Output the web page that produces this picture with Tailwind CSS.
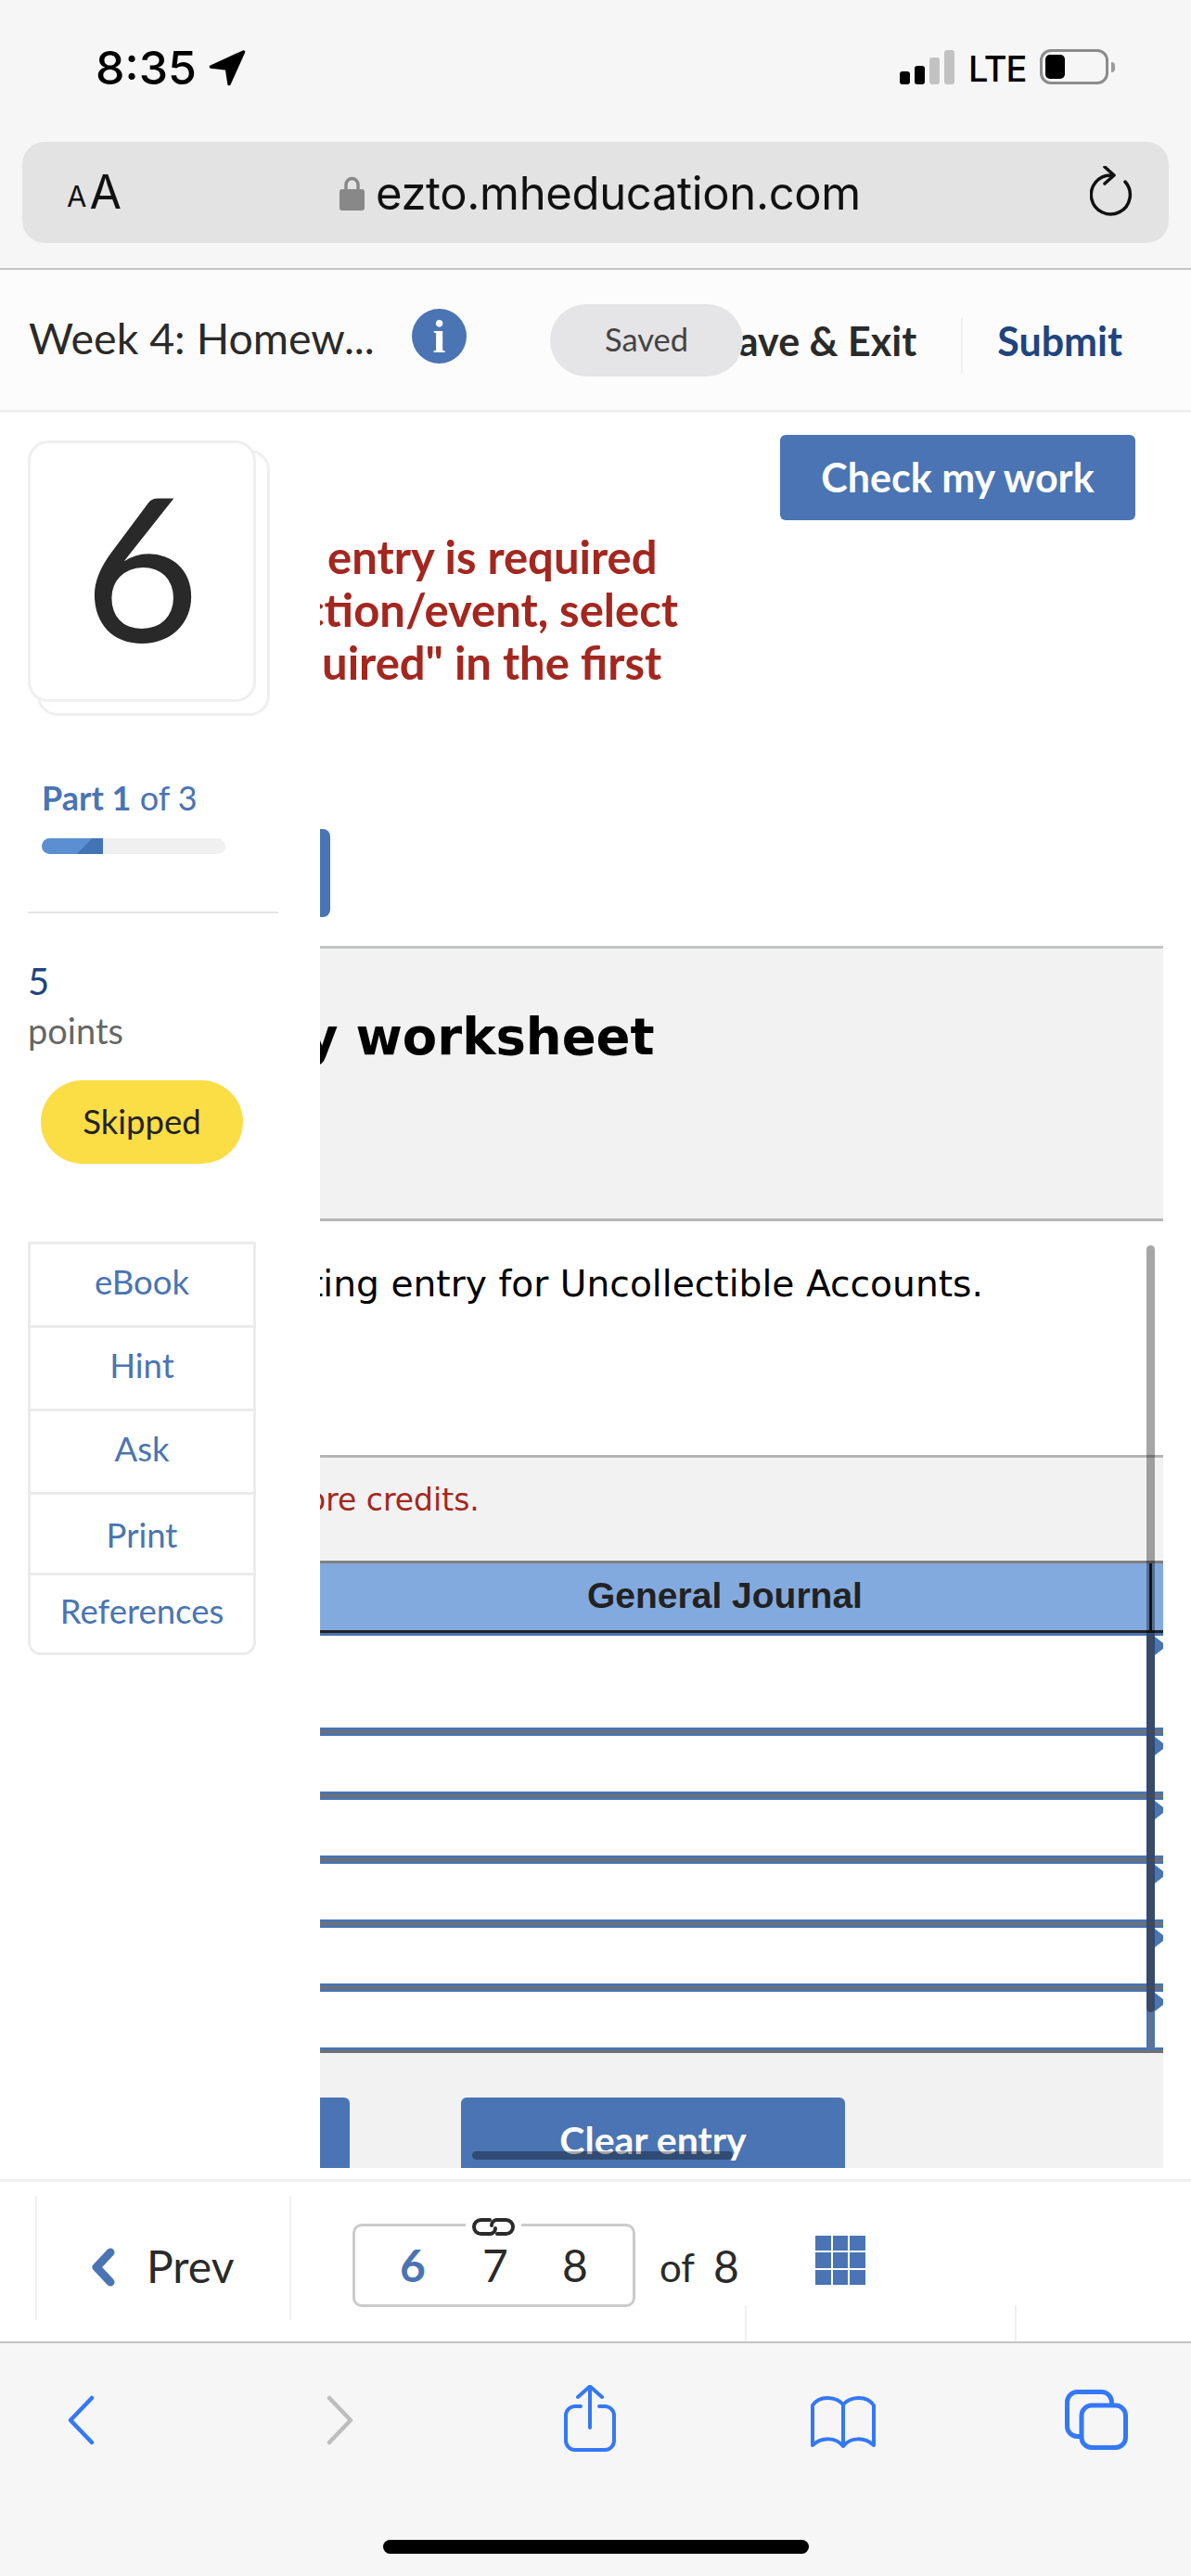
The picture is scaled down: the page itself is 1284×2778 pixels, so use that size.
<!DOCTYPE html>
<html lang="en">
<head>
<meta charset="UTF-8">
<title>ezto.mheducation.com</title>
<script src="https://cdn.jsdelivr.net/npm/@tailwindcss/browser@4"></script>
</head>
<body class="w-[1284px] h-[2778px] overflow-hidden bg-white font-['Lato',sans-serif] text-[#2a2a2a]">

<!-- safari top bar -->
<div class="h-[291px] bg-[#f6f6f6] border-b-2 border-[#c4c4c4] flex flex-col">
  <div class="h-[153px] flex items-start">
    <span class="ml-[103px] mt-[43px] font-['Inter',sans-serif] font-medium text-[50px] leading-[60px] text-black">8:35</span>
    <svg class="ml-[13px] mt-[54px]" width="40" height="39" viewBox="0 0 40 39"><path d="M37.5 2 L2.500 18 L19.500 20 L22 36.500 Z" fill="#000" stroke="#000" stroke-width="3.500" stroke-linejoin="round"/></svg>
    <div class="ml-[705px] mt-[54px] h-[37px] flex items-end gap-[5px]">
      <div class="w-[11px] h-[14px] rounded-[3px] bg-black"></div>
      <div class="w-[11px] h-[20px] rounded-[3px] bg-black"></div>
      <div class="w-[11px] h-[29px] rounded-[3px] bg-[#c2c2c2]"></div>
      <div class="w-[11px] h-[37px] rounded-[3px] bg-[#c2c2c2]"></div>
    </div>
    <span class="ml-[15px] mt-[51px] font-['Inter',sans-serif] font-medium text-[38px] leading-[46px] tracking-[-1px] text-black">LTE</span>
    <div class="ml-[14px] mt-[53px] w-[74px] h-[38px] rounded-[12px] border-[3px] border-[#8c8c8c] p-[3px]">
      <div class="w-[21px] h-[26px] rounded-[5px] bg-black"></div>
    </div>
    <div class="ml-[3px] mt-[67px] w-[4px] h-[11px] rounded-r-full bg-[#9a9a9a]"></div>
  </div>
  <div class="mx-[24px] h-[109px] rounded-[24px] bg-[#e3e3e3] flex items-start font-['Inter',sans-serif] text-[#111]">
    <span class="ml-[48px] mt-[44px] text-[31px] leading-[30px]">A</span>
    <span class="ml-[3px] mt-[29px] text-[50px] leading-[50px]">A</span>
    <svg class="ml-[235px] mt-[36px]" width="27" height="38" viewBox="0 0 27 38"><rect y="15" width="27" height="23" rx="3" fill="#888"/><path d="M7 17 V10 a6.500 6.500 0 0 1 13 0 V17" fill="none" stroke="#888" stroke-width="3.500"/></svg>
    <span class="ml-[12px] mt-[26px] text-[49px] leading-[60px] tracking-[-0.35px]">ezto.mheducation.com</span>
    <svg class="ml-[247px] mt-[26px]" width="46" height="54" viewBox="0 0 46 54"><path d="M38 17 A21 21 0 1 1 23 10" fill="none" stroke="#111" stroke-width="3.500" stroke-linecap="round"/><path d="M16 1 L26 10 L16 19" fill="none" stroke="#111" stroke-width="3.500" stroke-linecap="round" stroke-linejoin="round"/></svg>
  </div>
</div>

<!-- assignment header -->
<div class="relative h-[154px] bg-[#fcfcfc] border-b-[3px] border-[#f0f0f0] flex items-start">
  <span class="ml-[31px] mt-[45px] text-[46.500px] leading-[56px] whitespace-nowrap">Week 4: Homew...</span>
  <div class="ml-[40px] mt-[42px] w-[59px] h-[59px] rounded-full bg-[#4a74b3] flex items-center justify-center text-white font-['Liberation_Serif',serif] font-bold text-[50px] leading-none">i</div>
  <span class="ml-auto mt-[51px] font-bold text-[43px] leading-[52px] whitespace-nowrap">ave &amp; Exit</span>
  <div class="ml-[48px] mt-[52px] w-[2px] h-[60px] bg-[#efefef]"></div>
  <span class="ml-[37px] mr-[74px] mt-[51px] font-bold text-[43px] leading-[52px] text-[#1f4480]">Submit</span>
  <div class="absolute left-[593px] top-[37px] w-[208px] h-[78px] rounded-[39px] bg-[#e5e4e6] flex items-center justify-center pb-[3px] text-[34.500px] text-[#444]">Saved</div>
</div>

<!-- main -->
<div class="relative h-[1905px] flex bg-white">
  <!-- left rail -->
  <div class="w-[345px] shrink-0 pl-[30px] pt-[30px] flex flex-col items-start">
    <div class="relative w-[246px] h-[282px]">
      <div class="absolute left-[10px] top-[10px] w-[251px] h-[287px] rounded-[22px] border-[3px] border-[#efefef] bg-white"></div>
      <div class="absolute inset-0 rounded-[22px] border-[3px] border-[#efefef] bg-white flex justify-center items-center pb-[14px] text-[216px] leading-none text-[#292929]">6</div>
    </div>
    <div class="mt-[85px] ml-[15px] text-[36px] leading-[36px] text-[#4a74b3]"><span class="font-bold">Part 1</span> of 3</div>
    <div class="mt-[26px] ml-[15px] w-[198px] h-[17px] rounded-full bg-[#f0f0f0] overflow-hidden">
      <div class="w-[66px] h-full bg-[linear-gradient(135deg,#5a8fd1_66%,#4374b6_66%)]"></div>
    </div>
    <div class="mt-[62px] w-[270px] h-[2px] bg-[#e5e5e5]"></div>
    <div class="mt-[51px] text-[40px] leading-[45px] text-[#1f4480]">5</div>
    <div class="mt-[8px] text-[38px] leading-[44px] text-[#666]">points</div>
    <div class="mt-[32px] ml-[14px] w-[218px] h-[90px] rounded-full bg-[#fbdd45] flex items-center justify-center pb-[2px] text-[36.500px] text-[#222]">Skipped</div>
    <div class="mt-[84px] w-[246px] h-[446px] rounded-b-[14px] border-[3px] border-[#ebebeb] flex flex-col text-[36.500px] text-[#4a74b3] text-center">
      <div class="h-[90px] border-b-[3px] border-[#ebebeb] flex items-center justify-center pb-[6px]">eBook</div>
      <div class="h-[90px] border-b-[3px] border-[#ebebeb] flex items-center justify-center pb-[6px]">Hint</div>
      <div class="h-[90px] border-b-[3px] border-[#ebebeb] flex items-center justify-center pb-[6px]">Ask</div>
      <div class="h-[87px] border-b-[3px] border-[#ebebeb] flex items-center justify-center pt-[3px]">Print</div>
      <div class="h-[83px] flex items-center justify-center pb-[6px]">References</div>
    </div>
  </div>

  <!-- question column -->
  <div class="w-[909px] overflow-hidden flex flex-col">
    <div class="h-[116px] pt-[24px] flex justify-end pr-[30px]">
      <div class="w-[383px] h-[92px] rounded-[6px] bg-[#4a74b3] flex items-center justify-center text-white font-bold text-[43px]">Check my work</div>
    </div>
    <div class="mt-[11px] h-[171px] font-bold text-[49px] leading-[57px] text-[#a3271f] whitespace-nowrap">
      <div class="ml-[8px]">entry is required</div>
      <div class="-ml-[19px]">ction/event, select</div>
      <div class="ml-[2px]">uired" in the first</div>
    </div>
    <div class="mt-[151px] w-[11px] h-[95px] rounded-r-[8px] bg-[#4a74b3]"></div>

    <div class="mt-[31px] h-[297px] bg-[#f2f2f2] border-y-[3px] border-t-[#c3c5c5] border-b-[#b5b5b5] font-['DejaVu_Sans',sans-serif] font-bold text-[54.500px] leading-[64px] text-black whitespace-nowrap">
      <div class="-ml-[16px] mt-[63px]">y worksheet</div>
    </div>
    <div class="h-[252px] font-['DejaVu_Sans',sans-serif] text-[39.200px] leading-[46px] text-black whitespace-nowrap">
      <div class="-ml-[12px] mt-[45px]">ting entry for Uncollectible Accounts.</div>
    </div>
    <div class="h-[117px] bg-[#f2f2f2] border-y-[3px] border-t-[#b5b5b5] border-b-[#808080] font-['DejaVu_Sans',sans-serif] text-[33px] leading-[40px] text-[#a3271f] whitespace-nowrap">
      <div class="-ml-[14px] mt-[26px]">ore credits.</div>
    </div>

    <!-- journal table -->
    <div class="flex flex-col">
      <div class="h-[72px] bg-[#83aadf] flex font-['Liberation_Sans',sans-serif] font-bold text-[39px] text-[#222]">
        <div class="flex-1 pl-[288px] leading-[70px]">General Journal</div>
        <div class="w-[9px] flex justify-center"><div class="w-[3px] bg-[#1c1c1c]"></div></div>
        <div class="w-[9px]"></div>
      </div>
      <div class="h-[3px] bg-[#222]"></div>
      <div class="h-[3px] bg-[#4a74b3]"></div>

      <div class="h-[99px] flex">
        <div class="flex-1"></div>
        <div class="w-[9px] flex justify-center bg-[#4a74b3]"><div class="w-[3px] bg-[#707070]"></div></div>
        <div class="w-[9px] pt-[1px]"><div class="h-[20px] bg-[#4a74b3] [clip-path:polygon(0_0,100%_35%,100%_65%,0_100%)]"></div></div>
      </div>
      <div class="h-[9px] bg-[#707070] border-y-[3px] border-[#4a74b3]"></div>
      <div class="h-[60px] flex">
        <div class="flex-1"></div>
        <div class="w-[9px] flex justify-center bg-[#4a74b3]"><div class="w-[3px] bg-[#707070]"></div></div>
        <div class="w-[9px] pt-[1px]"><div class="h-[20px] bg-[#4a74b3] [clip-path:polygon(0_0,100%_35%,100%_65%,0_100%)]"></div></div>
      </div>
      <div class="h-[9px] bg-[#707070] border-y-[3px] border-[#4a74b3]"></div>
      <div class="h-[60px] flex">
        <div class="flex-1"></div>
        <div class="w-[9px] flex justify-center bg-[#4a74b3]"><div class="w-[3px] bg-[#707070]"></div></div>
        <div class="w-[9px] pt-[1px]"><div class="h-[20px] bg-[#4a74b3] [clip-path:polygon(0_0,100%_35%,100%_65%,0_100%)]"></div></div>
      </div>
      <div class="h-[9px] bg-[#707070] border-y-[3px] border-[#4a74b3]"></div>
      <div class="h-[60px] flex">
        <div class="flex-1"></div>
        <div class="w-[9px] flex justify-center bg-[#4a74b3]"><div class="w-[3px] bg-[#707070]"></div></div>
        <div class="w-[9px] pt-[1px]"><div class="h-[20px] bg-[#4a74b3] [clip-path:polygon(0_0,100%_35%,100%_65%,0_100%)]"></div></div>
      </div>
      <div class="h-[9px] bg-[#707070] border-y-[3px] border-[#4a74b3]"></div>
      <div class="h-[60px] flex">
        <div class="flex-1"></div>
        <div class="w-[9px] flex justify-center bg-[#4a74b3]"><div class="w-[3px] bg-[#707070]"></div></div>
        <div class="w-[9px] pt-[1px]"><div class="h-[20px] bg-[#4a74b3] [clip-path:polygon(0_0,100%_35%,100%_65%,0_100%)]"></div></div>
      </div>
      <div class="h-[9px] bg-[#707070] border-y-[3px] border-[#4a74b3]"></div>
      <div class="h-[60px] flex">
        <div class="flex-1"></div>
        <div class="w-[9px] flex justify-center bg-[#4a74b3]"><div class="w-[3px] bg-[#707070]"></div></div>
        <div class="w-[9px] pt-[1px]"><div class="h-[20px] bg-[#4a74b3] [clip-path:polygon(0_0,100%_35%,100%_65%,0_100%)]"></div></div>
      </div>
      <div class="h-[6px] bg-[#707070] border-t-[3px] border-[#4a74b3]"></div>
    </div>

    <div class="h-[124px] bg-[#f2f2f2] overflow-hidden flex gap-[120px] pt-[48px]">
      <div class="w-[32px] h-[80px] rounded-tr-[6px] bg-[#4a74b3]"></div>
      <div class="w-[414px] h-[80px] rounded-t-[6px] bg-[#4a74b3] text-center text-white font-bold text-[41px] leading-[48px] pt-[22px]">Clear entry</div>
    </div>
  </div>

  <!-- ios scroll indicators over the content -->
  <div class="absolute left-[1236px] top-[898px] w-[9px] h-[827px] rounded-full bg-black/35"></div>
  <div class="absolute left-[509px] top-[1875px] w-[281px] h-[9px] rounded-full bg-black/35"></div>
</div>

<!-- question nav -->
<div class="relative h-[177px] bg-white border-t-[3px] border-b-2 border-t-[#f0f0f0] border-b-[#c4c4c4] flex items-start">
  <div class="ml-[38px] mt-[15px] w-[276px] h-[134px] border-x-2 border-[#f0f0f0] flex items-start">
    <svg class="ml-[57px] mt-[56px]" width="28" height="42" viewBox="0 0 28 42"><path d="M22 5 L7 21 L22 37" fill="none" stroke="#4a74b3" stroke-width="9" stroke-linecap="round" stroke-linejoin="round"/></svg>
    <span class="ml-[33px] mt-[47px] text-[48px] leading-[58px]">Prev</span>
  </div>
  <div class="relative ml-[66px] mt-[45px] w-[305px] h-[90px] rounded-[10px] border-[3px] border-[#cbcbcb] flex items-start text-[48px] leading-[58px]">
    <span class="absolute left-[48px] top-[13px] font-bold text-[#4a74b3]">6</span>
    <span class="absolute left-[137px] top-[13px]">7</span>
    <span class="absolute left-[223px] top-[13px]">8</span>
    <div class="absolute left-[119px] -top-[10px] w-[60px] h-[24px] bg-white flex justify-center">
      <svg width="48" height="21" viewBox="0 0 48 21"><path d="M20 3 H10.500 a7.500 7.500 0 0 0 0 15 H21 a6 6 0 0 0 5 -6" fill="none" stroke="#2a2a2a" stroke-width="4" stroke-linecap="round"/><path d="M28 18 H37.500 a7.500 7.500 0 0 0 0 -15 H27 a6 6 0 0 0 -5 6" fill="none" stroke="#2a2a2a" stroke-width="4" stroke-linecap="round"/></svg>
    </div>
  </div>
  <span class="ml-[26px] mt-[64px] text-[42px] leading-[56px] whitespace-nowrap">of</span>
  <span class="ml-[20px] mt-[62px] text-[48px] leading-[58px]">8</span>
  <div class="ml-[82px] mt-[58px] w-[54px] h-[53px] grid grid-cols-3 grid-rows-3 gap-[2px]">
    <div class="bg-[#4a74b3]"></div><div class="bg-[#4a74b3]"></div><div class="bg-[#4a74b3]"></div>
    <div class="bg-[#4a74b3]"></div><div class="bg-[#4a74b3]"></div><div class="bg-[#4a74b3]"></div>
    <div class="bg-[#4a74b3]"></div><div class="bg-[#4a74b3]"></div><div class="bg-[#4a74b3]"></div>
  </div>
  <div class="absolute left-[803px] bottom-0 w-[293px] h-[39px] border-x-2 border-[#f0f0f0]"></div>
</div>

<!-- safari toolbar -->
<div class="h-[251px] bg-[#f6f6f6] flex flex-col">
  <div class="h-[118px] flex items-start">
    <svg class="ml-[72px] mt-[56px]" width="30" height="54" viewBox="0 0 30 54"><path d="M27 3 L4 27 L27 51" fill="none" stroke="#3478f6" stroke-width="4.500" stroke-linecap="round" stroke-linejoin="round"/></svg>
    <svg class="ml-[250px] mt-[56px]" width="30" height="54" viewBox="0 0 30 54"><path d="M3 3 L26 27 L3 51" fill="none" stroke="#bdbdbd" stroke-width="4.500" stroke-linecap="round" stroke-linejoin="round"/></svg>
    <svg class="ml-[226px] mt-[45px]" width="56" height="72" viewBox="0 0 56 72"><path d="M15 13 L28 1.500 L41 13 M28 2 V46" fill="none" stroke="#3478f6" stroke-width="4" stroke-linecap="round" stroke-linejoin="round"/><path d="M18 23 H12 a10 10 0 0 0 -10 10 V60 a10 10 0 0 0 10 10 H44 a10 10 0 0 0 10 -10 V33 a10 10 0 0 0 -10 -10 H38" fill="none" stroke="#3478f6" stroke-width="4" stroke-linecap="round"/></svg>
    <svg class="ml-[210px] mt-[55px]" width="70" height="58" viewBox="0 0 70 58"><path d="M35 11 C28 3 10 0 2 12 V55 C12 46 27 46 35 56 C43 46 58 46 68 55 V12 C60 0 42 3 35 11 Z M35 11 V56" fill="none" stroke="#3478f6" stroke-width="4" stroke-linejoin="round"/></svg>
    <svg class="ml-[204px] mt-[50px]" width="68" height="65" viewBox="0 0 68 65"><rect x="2.500" y="2.500" width="48" height="48" rx="11" fill="none" stroke="#3478f6" stroke-width="5"/><rect x="18" y="17" width="47.500" height="45.500" rx="11" fill="#f6f6f6" stroke="#3478f6" stroke-width="5"/></svg>
  </div>
  <div class="mt-[94px] ml-[413px] w-[459px] h-[15px] rounded-full bg-black"></div>
</div>

</body>
</html>
